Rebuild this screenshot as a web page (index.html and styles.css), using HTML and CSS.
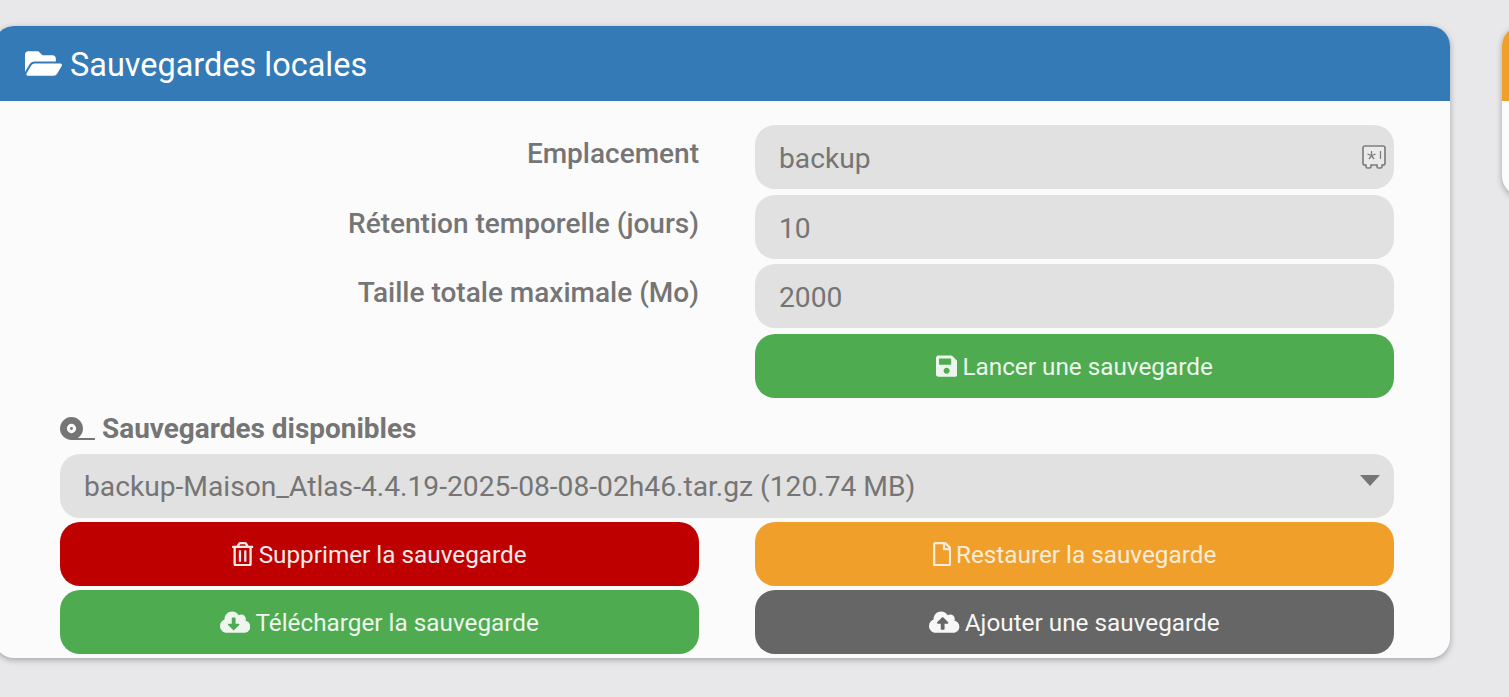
FILE: index.html
```html
<!DOCTYPE html>
<html lang="fr">
<head>
<meta charset="utf-8">
<title>Sauvegardes locales</title>
<link rel="stylesheet" href="styles.css">
</head>
<body>
<div class="viewport">
<main class="page">
  <section class="card">
    <header class="card-head head-blue">
      <svg class="head-icon" viewBox="0 0 576 512"><path d="M572.694 292.093L500.27 416.248A63.997 63.997 0 0 1 444.989 448H45.025c-18.523 0-30.064-20.093-20.731-36.093l72.424-124.155A64 64 0 0 1 152 256h399.964c18.523 0 30.064 20.093 20.73 36.093zM152 224h328v-48c0-26.51-21.49-48-48-48H272l-64-64H48C21.49 64 0 85.49 0 112v278.046l69.077-118.418C86.214 242.25 117.989 224 152 224z"/></svg>
      <h2 class="card-title">Sauvegardes locales</h2>
    </header>
    <div class="card-body">
      <div class="form-grid">
        <label class="field-label" for="loc">Emplacement</label>
        <div class="input-wrap">
          <input class="field" id="loc" value="backup">
          <svg class="safe-icon" viewBox="0 0 24 24"><path class="safe-line" d="M3 1h18a2 2 0 0 1 2 2v15a2 2 0 0 1-2 2h-1v1.500a1.500 1.500 0 0 1-1.500 1.500h-2a1.500 1.500 0 0 1-1.500-1.500V20H9v1.500A1.500 1.500 0 0 1 7.500 23h-2A1.500 1.500 0 0 1 4 21.500V20H3a2 2 0 0 1-2-2V3a2 2 0 0 1 2-2z"/><path class="safe-mark" d="M9.500 6v4.500M9.500 10.500l-4 -1.300M9.500 10.500l4 -1.300M9.500 10.500l-2.500 3.500M9.500 10.500l2.500 3.500M18.500 6v8"/></svg>
        </div>
        <label class="field-label" for="ret">Rétention temporelle (jours)</label>
        <input class="field" id="ret" value="10">
        <label class="field-label" for="max">Taille totale maximale (Mo)</label>
        <input class="field" id="max" value="2000">
        <button class="btn btn-green launch">
          <svg class="btn-icon" viewBox="0 0 448 512"><path d="M433.941 129.941l-83.882-83.882A48 48 0 0 0 316.118 32H48C21.49 32 0 53.49 0 80v352c0 26.51 21.49 48 48 48h352c26.51 0 48-21.49 48-48V163.882a48 48 0 0 0-14.059-33.941zM224 416c-35.346 0-64-28.654-64-64 0-35.346 28.654-64 64-64s64 28.654 64 64c0 35.346-28.654 64-64 64zm96-304.52V212c0 6.627-5.373 12-12 12H76c-6.627 0-12-5.373-12-12V108c0-6.627 5.373-12 12-12h228.52c3.183 0 6.235 1.264 8.485 3.515l3.48 3.48A11.996 11.996 0 0 1 320 111.48z"/></svg>
          Lancer une sauvegarde
        </button>
      </div>
      <h3 class="sub-title">
        <svg class="tape-icon" viewBox="0 0 640 420"><path fill-rule="evenodd" d="M210 0a210 210 0 1 1 0 420a210 210 0 1 1 0-420zM210 125a85 85 0 1 0 0 170a85 85 0 1 0 0-170z"/><circle cx="210" cy="210" r="26"/><rect x="210" y="382" width="430" height="38" rx="8"/></svg>
        Sauvegardes disponibles
      </h3>
      <div class="select-wrap">
        <select class="field select">
          <option>backup-Maison_Atlas-4.4.19-2025-08-08-02h46.tar.gz (120.74 MB)</option>
        </select>
        <span class="select-arrow"></span>
      </div>
      <div class="actions">
        <button class="btn btn-red">
          <svg class="btn-icon" viewBox="0 0 448 512"><path d="M268 416h24a12 12 0 0 0 12-12V188a12 12 0 0 0-12-12h-24a12 12 0 0 0-12 12v216a12 12 0 0 0 12 12zM432 80h-82.410l-34-56.700A48 48 0 0 0 274.410 0H173.590a48 48 0 0 0-41.160 23.300L98.410 80H16A16 16 0 0 0 0 96v16a16 16 0 0 0 16 16h16v336a48 48 0 0 0 48 48h288a48 48 0 0 0 48-48V128h16a16 16 0 0 0 16-16V96a16 16 0 0 0-16-16zM171.840 50.910A6 6 0 0 1 177 48h94a6 6 0 0 1 5.150 2.910L293.610 80H154.390zM368 464H80V128h288zm-212-48h24a12 12 0 0 0 12-12V188a12 12 0 0 0-12-12h-24a12 12 0 0 0-12 12v216a12 12 0 0 0 12 12z"/></svg>
          Supprimer la sauvegarde
        </button>
        <button class="btn btn-orange">
          <svg class="btn-icon" viewBox="0 0 384 512"><path d="M369.900 97.900L286 14C277 5 264.800-.1 252.100-.1H48C21.500 0 0 21.500 0 48v416c0 26.500 21.500 48 48 48h288c26.500 0 48-21.500 48-48V131.900c0-12.700-5.100-25-14.100-34zM332.100 128H256V51.900l76.100 76.100zM48 464V48h160v104c0 13.300 10.700 24 24 24h104v288H48z"/></svg>
          Restaurer la sauvegarde
        </button>
        <button class="btn btn-green">
          <svg class="btn-icon" viewBox="0 0 640 512"><path d="M537.600 226.600c4.100-10.700 6.400-22.400 6.400-34.600 0-53-43-96-96-96-19.700 0-38.100 6-53.300 16.200C367 64.200 315.300 32 256 32c-88.400 0-160 71.600-160 160 0 2.700.1 5.400.2 8.100C40.200 219.800 0 273.200 0 336c0 79.500 64.500 144 144 144h368c70.700 0 128-57.300 128-128 0-61.900-44-113.600-102.400-125.400zm-132.900 88.700L299.300 420.700c-6.200 6.200-16.400 6.200-22.600 0L171.300 315.300c-10.100-10.100-2.900-27.300 11.300-27.300H248V176c0-8.800 7.200-16 16-16h48c8.800 0 16 7.200 16 16v112h65.400c14.200 0 21.400 17.200 11.300 27.300z"/></svg>
          Télécharger la sauvegarde
        </button>
        <button class="btn btn-grey">
          <svg class="btn-icon" viewBox="0 0 640 512"><path d="M537.600 226.600c4.100-10.700 6.400-22.400 6.400-34.600 0-53-43-96-96-96-19.700 0-38.100 6-53.300 16.200C367 64.200 315.300 32 256 32c-88.400 0-160 71.600-160 160 0 2.700.1 5.400.2 8.100C40.200 219.800 0 273.200 0 336c0 79.500 64.500 144 144 144h368c70.700 0 128-57.300 128-128 0-61.900-44-113.600-102.400-125.400zM393.400 288H328v112c0 8.800-7.200 16-16 16h-48c-8.800 0-16-7.200-16-16V288h-65.400c-14.300 0-21.400-17.200-11.300-27.300l105.400-105.400c6.200-6.200 16.400-6.200 22.600 0l105.400 105.400c10.100 10.100 2.900 27.300-11.300 27.300z"/></svg>
          Ajouter une sauvegarde
        </button>
      </div>
    </div>
  </section>
  <section class="card card-side">
    <header class="card-head head-orange"></header>
    <div class="side-body"></div>
  </section>
</main>
</div>
</body>
</html>
```
FILE: styles.css
```css
* { box-sizing: border-box; }
html, body { margin: 0; height: 100%; overflow: hidden; }
body { background: #e8e8ea; font-family: Roboto, "Liberation Sans", sans-serif; }
.viewport { width: 100%; height: 100%; overflow: hidden; }
.page { display: flex; align-items: flex-start; gap: 52px; padding-top: 26px; margin-left: -6px; width: 2000px; }
.card { flex: none; width: 1456px; border-radius: 20px; background: #fbfbfb; box-shadow: 0 2px 6px rgba(0,0,0,.3); overflow: hidden; }
.card-side { width: 400px; }
.card-head { height: 75px; display: flex; align-items: center; padding-left: 31px; gap: 8px; color: #fff; }
.head-blue { background: #337ab7; }
.head-orange { background: #f0a02a; }
.head-icon { width: 37px; height: 33px; fill: #fff; flex: none; }
.card-title { margin: 0; font-size: 32.450px; font-weight: 400; line-height: 1; padding-top: 3px; }
.card-body { padding: 24px 56px 4px 66px; }
.side-body { height: 95px; }
.form-grid { display: grid; grid-template-columns: 639px 639px; column-gap: 56px; row-gap: 5.600px; grid-auto-rows: 64px; }
.field-label { text-align: right; font-size: 28px; font-weight: 500; color: #757575; line-height: 57px; }
.launch { grid-column: 2; }
.input-wrap, .select-wrap { position: relative; }
.field { display: block; width: 100%; height: 64px; border: 0; border-radius: 20px; background: #e0e1e0; color: #757575; font: 400 28.200px Roboto, "Liberation Sans", sans-serif; padding: 3px 24px 0; outline: none; }
.select { appearance: none; -webkit-appearance: none; padding-top: 2px; }
.safe-icon { position: absolute; right: 8px; top: 20px; width: 24px; height: 24px; }
.safe-line { fill: #e9eae9; stroke: #7e7e7e; stroke-width: 1.700; }
.safe-mark { fill: none; stroke: #7e7e7e; stroke-width: 1.300; }
.select-arrow { position: absolute; right: 14px; top: 21px; border-left: 10px solid transparent; border-right: 10px solid transparent; border-top: 11px solid #757575; }
.sub-title { display: flex; align-items: center; gap: 7px; margin: 0; height: 56px; padding-top: 5px; font-size: 27.950px; font-weight: 700; color: #757575; }
.tape-icon { width: 35px; height: 23px; fill: #757575; flex: none; }
.actions { display: grid; grid-template-columns: 639px 639px; column-gap: 56px; row-gap: 4px; margin-top: 4px; }
.btn { display: flex; align-items: center; justify-content: center; gap: 5px; height: 64px; border: 0; border-radius: 20px; font: 400 24.300px Roboto, "Liberation Sans", sans-serif; padding: 1px 0 0; }
.btn-icon { height: 24.300px; width: auto; fill: currentColor; flex: none; }
.btn-green { background: #4fab50; color: #eef5ee; }
.btn-red { background: #bf0000; color: #f5eaea; }
.btn-orange { background: #f0a02a; color: #f8ecdb; }
.btn-grey { background: #666; color: #f7f7f7; }
```
